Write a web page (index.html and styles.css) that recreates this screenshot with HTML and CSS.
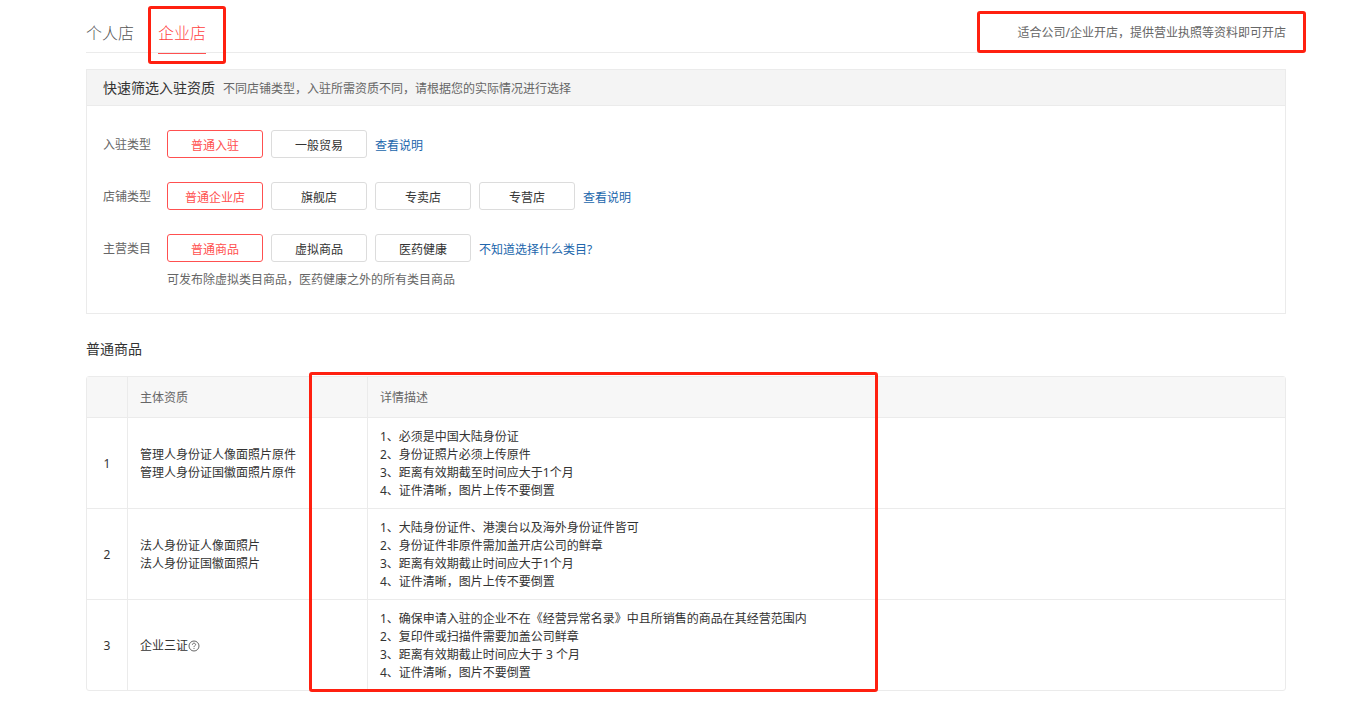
FILE: index.html
```html
<!DOCTYPE html>
<html lang="zh-CN">
<head>
<meta charset="utf-8">
<title>入驻资质</title>
<link rel="stylesheet" href="styles.css">
</head>
<body>
<main class="page">
  <header class="topbar">
    <nav class="tabs">
      <a class="tab" href="#personal">个人店</a>
      <a class="tab tab-active" href="#company">企业店<span class="mark mark-tab"></span></a>
    </nav>
    <p class="topbar-note">适合公司/企业开店，提供营业执照等资料即可开店<span class="mark mark-note"></span></p>
  </header>

  <section class="panel">
    <div class="panel-head">
      <h2 class="panel-title">快速筛选入驻资质</h2>
      <p class="panel-sub">不同店铺类型，入驻所需资质不同，请根据您的实际情况进行选择</p>
    </div>
    <div class="panel-body">
      <div class="filter" role="group" aria-labelledby="label-entry">
        <span class="filter-label" id="label-entry">入驻类型</span>
        <button class="option option-on" type="button" aria-pressed="true">普通入驻</button>
        <button class="option" type="button">一般贸易</button>
        <a class="help" href="#entry-help">查看说明</a>
      </div>
      <div class="filter" role="group" aria-labelledby="label-shop">
        <span class="filter-label" id="label-shop">店铺类型</span>
        <button class="option option-on" type="button" aria-pressed="true">普通企业店</button>
        <button class="option" type="button">旗舰店</button>
        <button class="option" type="button">专卖店</button>
        <button class="option" type="button">专营店</button>
        <a class="help" href="#shop-help">查看说明</a>
      </div>
      <div class="filter" role="group" aria-labelledby="label-category">
        <span class="filter-label" id="label-category">主营类目</span>
        <button class="option option-on" type="button" aria-pressed="true">普通商品</button>
        <button class="option" type="button">虚拟商品</button>
        <button class="option" type="button">医药健康</button>
        <a class="help" href="#category-help">不知道选择什么类目?</a>
      </div>
      <p class="filter-hint">可发布除虚拟类目商品，医药健康之外的所有类目商品</p>
    </div>
  </section>

  <h3 class="section-title">普通商品</h3>
  <div class="table-wrap">
    <table class="docs">
      <thead>
        <tr><th class="col-no"></th><th class="col-name">主体资质</th><th>详情描述</th></tr>
      </thead>
      <tbody>
        <tr>
          <td class="col-no">1</td>
          <td>管理人身份证人像面照片原件<br>管理人身份证国徽面照片原件</td>
          <td>1、必须是中国大陆身份证<br>2、身份证照片必须上传原件<br>3、距离有效期截至时间应大于1个月<br>4、证件清晰，图片上传不要倒置</td>
        </tr>
        <tr>
          <td class="col-no">2</td>
          <td>法人身份证人像面照片<br>法人身份证国徽面照片</td>
          <td>1、大陆身份证件、港澳台以及海外身份证件皆可<br>2、身份证件非原件需加盖开店公司的鲜章<br>3、距离有效期截止时间应大于1个月<br>4、证件清晰，图片上传不要倒置</td>
        </tr>
        <tr>
          <td class="col-no">3</td>
          <td><span class="with-icon">企业三证<svg class="icon-help" viewBox="0 0 12 12" aria-hidden="true"><circle cx="6" cy="6" r="5"/><path d="M4.400 4.800C4.400 3.700 5.100 3.200 6 3.200s1.600.6 1.600 1.400C7.600 5.600 6 5.700 6 7.100M6 8.100v.9"/></svg></span></td>
          <td>1、确保申请入驻的企业不在《经营异常名录》中且所销售的商品在其经营范围内<br>2、复印件或扫描件需要加盖公司鲜章<br>3、距离有效期截止时间应大于 3 个月<br>4、证件清晰，图片不要倒置</td>
        </tr>
      </tbody>
    </table>
    <span class="mark mark-table"></span>
  </div>
</main>
</body>
</html>
```

FILE: styles.css
```css
* {
  box-sizing: border-box;
}

body {
  margin: 0;
  background: #fff;
  color: #333;
  font: 400 12px/18px "Noto Sans", "Noto Sans CJK SC", sans-serif;
}

h2, h3, p {
  margin: 0;
  font-weight: inherit;
}

a {
  text-decoration: none;
}

.page {
  padding: 0 76px 20px 86px;
}

/* Top tabs */
.topbar {
  display: flex;
  align-items: flex-end;
  justify-content: space-between;
  padding-top: 12px;
  border-bottom: 1px solid #ebebeb;
}

.tabs {
  display: flex;
  gap: 24px;
  margin-bottom: -2px;
}

.tab {
  position: relative;
  height: 40px;
  border-bottom: 1px solid transparent;
  color: #555;
  font-size: 16px;
  font-weight: 300;
  line-height: 38px;
}

.tab-active {
  border-color: #ff5050;
  color: #ff4040;
}

.topbar-note {
  position: relative;
  padding-top: 2px;
  color: #666;
  line-height: 38px;
}

/* Red highlight frames */
.mark {
  position: absolute;
  border: 3px solid #ff2010;
  border-radius: 3px;
  pointer-events: none;
}

.mark-tab {
  inset: -8px -20px -11px -10px;
}

.mark-note {
  inset: -1px -20px -1px -41px;
}

.mark-table {
  top: -4px;
  bottom: -1px;
  left: 223px;
  width: 569px;
}

/* Filter panel */
.panel {
  margin-top: 16px;
  border: 1px solid #ebebeb;
}

.panel-head {
  display: flex;
  align-items: center;
  gap: 8px;
  height: 36px;
  padding: 0 16px;
  border-bottom: 1px solid #ebebeb;
  background: #f4f4f4;
}

.panel-title {
  font-size: 14px;
}

.panel-sub {
  padding-top: 2px;
  color: #666;
}

.panel-body {
  padding: 24px 16px;
}

.filter {
  display: flex;
  align-items: center;
  gap: 8px;
  margin-bottom: 24px;
}

.filter-label {
  width: 56px;
  padding-top: 2px;
  color: #666;
}

.option {
  width: 96px;
  height: 28px;
  padding: 3px 0 0;
  border: 1px solid #dcdcdc;
  border-radius: 3px;
  background: #fff;
  color: #333;
  font: inherit;
}

.option-on {
  border-color: #ff5050;
  color: #ff5050;
}

.help {
  padding-top: 3px;
  color: #2166ac;
}

.filter-hint {
  margin: -16px 0 0 64px;
  padding-top: 1px;
  color: #666;
}

/* Document table */
.section-title {
  margin: 24px 0 16px;
  font-size: 14px;
  line-height: 22px;
}

.table-wrap {
  position: relative;
}

.docs {
  width: 100%;
  border: 1px solid #ebebeb;
  border-radius: 3px;
  border-spacing: 0;
  table-layout: fixed;
}

.docs th,
.docs td {
  padding: 10px 12px 8px;
  border-bottom: 1px solid #ebebeb;
  border-left: 1px solid #ebebeb;
  text-align: left;
  vertical-align: middle;
}

.docs th {
  height: 41px;
  background: #f7f7f7;
  color: #666;
  font-weight: inherit;
}

.docs tbody tr:last-child td {
  border-bottom: 0;
}

.docs .col-no {
  width: 40px;
  padding: 10px 0 8px;
  border-left: 0;
  text-align: center;
}

.docs .col-name {
  width: 240px;
}

.with-icon {
  display: inline-flex;
  align-items: center;
}

.icon-help {
  width: 12px;
  height: 12px;
  fill: none;
  stroke: #666;
}
```
